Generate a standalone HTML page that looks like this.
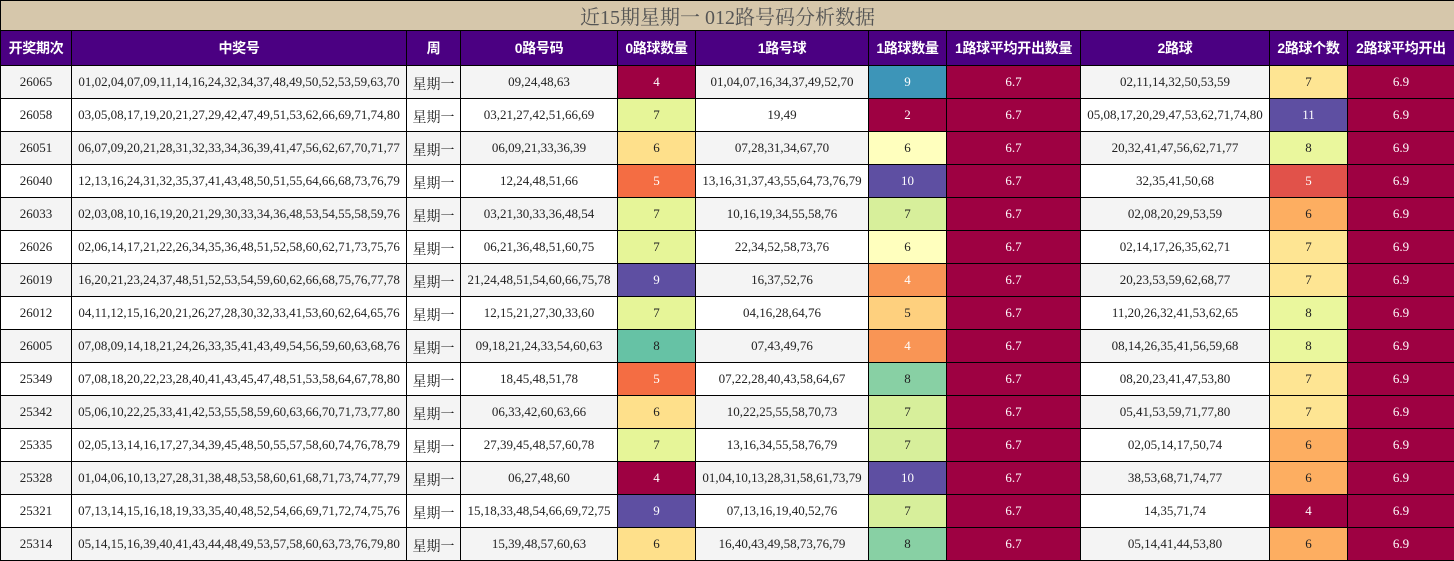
<!DOCTYPE html>
<html><head><meta charset="utf-8">
<style>
*{margin:0;padding:0;box-sizing:border-box}
body{width:1454px;height:560px;overflow:hidden;background:#fff;font-family:"Liberation Serif","Noto Serif CJK SC","Noto Sans CJK SC",serif}
table{border-collapse:collapse;table-layout:fixed;width:1454px}
td,th{border:1px solid #000;text-align:center;font-size:13px;color:#222;white-space:nowrap;overflow:hidden}
.t td{background:#d6c7ab;color:#555;font-size:20px;height:28px;font-weight:normal}
th{background:#4b0082;color:#fff;font-size:14px;height:35px;font-weight:bold;font-family:"Liberation Sans","Noto Sans CJK SC",sans-serif;letter-spacing:-0.3px}
tr.d td{height:33px}
tr.d:nth-child(odd) td{background:#f4f4f4}
tr.d:nth-child(even) td{background:#fff}
tr.d td.w{font-size:14px;padding-top:3px}
tr.d td.c{color:#fff}
</style></head><body>
<table>
<colgroup><col style="width:71px"><col style="width:335px"><col style="width:54px"><col style="width:157px"><col style="width:78px"><col style="width:173px"><col style="width:78px"><col style="width:134px"><col style="width:189px"><col style="width:78px"><col style="width:107px"></colgroup>
<tr class="t"><td colspan="11">近15期星期一 012路号码分析数据</td></tr>
<tr><th>开奖期次</th><th>中奖号</th><th>周</th><th>0路号码</th><th>0路球数量</th><th>1路号球</th><th>1路球数量</th><th>1路球平均开出数量</th><th>2路球</th><th>2路球个数</th><th>2路球平均开出</th></tr>
<tbody id="b"></tbody>
</table>
<script>
var R=[
["26065","01,02,04,07,09,11,14,16,24,32,34,37,48,49,50,52,53,59,63,70","09,24,48,63",4,"01,04,07,16,34,37,49,52,70",9,"02,11,14,32,50,53,59",7],
["26058","03,05,08,17,19,20,21,27,29,42,47,49,51,53,62,66,69,71,74,80","03,21,27,42,51,66,69",7,"19,49",2,"05,08,17,20,29,47,53,62,71,74,80",11],
["26051","06,07,09,20,21,28,31,32,33,34,36,39,41,47,56,62,67,70,71,77","06,09,21,33,36,39",6,"07,28,31,34,67,70",6,"20,32,41,47,56,62,71,77",8],
["26040","12,13,16,24,31,32,35,37,41,43,48,50,51,55,64,66,68,73,76,79","12,24,48,51,66",5,"13,16,31,37,43,55,64,73,76,79",10,"32,35,41,50,68",5],
["26033","02,03,08,10,16,19,20,21,29,30,33,34,36,48,53,54,55,58,59,76","03,21,30,33,36,48,54",7,"10,16,19,34,55,58,76",7,"02,08,20,29,53,59",6],
["26026","02,06,14,17,21,22,26,34,35,36,48,51,52,58,60,62,71,73,75,76","06,21,36,48,51,60,75",7,"22,34,52,58,73,76",6,"02,14,17,26,35,62,71",7],
["26019","16,20,21,23,24,37,48,51,52,53,54,59,60,62,66,68,75,76,77,78","21,24,48,51,54,60,66,75,78",9,"16,37,52,76",4,"20,23,53,59,62,68,77",7],
["26012","04,11,12,15,16,20,21,26,27,28,30,32,33,41,53,60,62,64,65,76","12,15,21,27,30,33,60",7,"04,16,28,64,76",5,"11,20,26,32,41,53,62,65",8],
["26005","07,08,09,14,18,21,24,26,33,35,41,43,49,54,56,59,60,63,68,76","09,18,21,24,33,54,60,63",8,"07,43,49,76",4,"08,14,26,35,41,56,59,68",8],
["25349","07,08,18,20,22,23,28,40,41,43,45,47,48,51,53,58,64,67,78,80","18,45,48,51,78",5,"07,22,28,40,43,58,64,67",8,"08,20,23,41,47,53,80",7],
["25342","05,06,10,22,25,33,41,42,53,55,58,59,60,63,66,70,71,73,77,80","06,33,42,60,63,66",6,"10,22,25,55,58,70,73",7,"05,41,53,59,71,77,80",7],
["25335","02,05,13,14,16,17,27,34,39,45,48,50,55,57,58,60,74,76,78,79","27,39,45,48,57,60,78",7,"13,16,34,55,58,76,79",7,"02,05,14,17,50,74",6],
["25328","01,04,06,10,13,27,28,31,38,48,53,58,60,61,68,71,73,74,77,79","06,27,48,60",4,"01,04,10,13,28,31,58,61,73,79",10,"38,53,68,71,74,77",6],
["25321","07,13,14,15,16,18,19,33,35,40,48,52,54,66,69,71,72,74,75,76","15,18,33,48,54,66,69,72,75",9,"07,13,16,19,40,52,76",7,"14,35,71,74",4],
["25314","05,14,15,16,39,40,41,43,44,48,49,53,57,58,60,63,73,76,79,80","15,39,48,57,60,63",6,"16,40,43,49,58,73,76,79",8,"05,14,41,44,53,80",6]];
var C0={4:"#9e0142",5:"#f46d43",6:"#fee08b",7:"#e6f598",8:"#66c2a5",9:"#5e4fa2"};
var C1={2:"#9e0142",4:"#f99555",5:"#fed07e",6:"#ffffbe",7:"#d7ef9b",8:"#88d0a4",9:"#3d95b8",10:"#5e4fa2"};
var C2={4:"#9e0142",5:"#e1524a",6:"#fdae61",7:"#fee593",8:"#eaf79d",11:"#5e4fa2"};
var W0={4:1,5:1,9:1},W1={2:1,4:1,9:1,10:1},W2={4:1,5:1,11:1};
var h="";
R.forEach(function(r){
h+='<tr class="d"><td>'+r[0]+'</td><td>'+r[1]+'</td><td class="w">星期一</td><td>'+r[2]+'</td>'+
'<td class="'+(W0[r[3]]?'c':'')+'" style="background:'+C0[r[3]]+'">'+r[3]+'</td><td>'+r[4]+'</td>'+
'<td class="'+(W1[r[5]]?'c':'')+'" style="background:'+C1[r[5]]+'">'+r[5]+'</td>'+
'<td class="c" style="background:#9e0142">6.7</td><td>'+r[6]+'</td>'+
'<td class="'+(W2[r[7]]?'c':'')+'" style="background:'+C2[r[7]]+'">'+r[7]+'</td>'+
'<td class="c" style="background:#9e0142">6.9</td></tr>';});
document.getElementById("b").innerHTML=h;
</script>
</body></html>
